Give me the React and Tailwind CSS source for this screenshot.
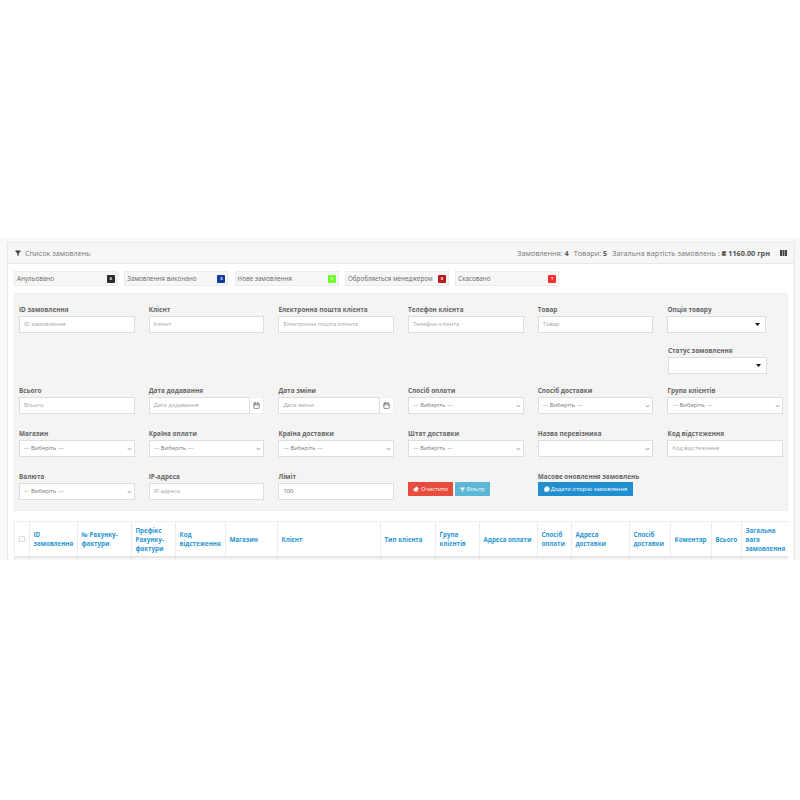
import React from 'react';
import { Filter, Calendar, Eraser, MessageCircle } from 'lucide-react';

const badges = [
  { name: 'Анульовано', count: 6, color: 'bg-[#2b2b2b]' },
  { name: 'Замовлення виконано', count: 3, color: 'bg-[#0f3d99]' },
  { name: 'Нове замовлення', count: 0, color: 'bg-[#6bff2e]' },
  { name: 'Обробляється менеджером', count: 0, color: 'bg-[#b71c1c]' },
  { name: 'Скасовано', count: 1, color: 'bg-[#ff2d2d]' },
];

const columns = [
  { w: 'w-[15px]', text: '' },
  { w: 'w-[48px]', text: 'ID замовлення' },
  { w: 'w-[54px]', text: '№ Рахунку-фактури' },
  { w: 'w-[44px]', text: 'Префікс Рахунку-фактури' },
  { w: 'w-[50px]', text: 'Код відстеження' },
  { w: 'w-[52px]', text: 'Магазин' },
  { w: 'w-[103px]', text: 'Клієнт' },
  { w: 'w-[55px]', text: 'Тип клієнта' },
  { w: 'w-[44px]', text: 'Група клієнтів' },
  { w: 'w-[58px]', text: 'Адреса оплати' },
  { w: 'w-[34px]', text: 'Спосіб оплати' },
  { w: 'w-[58px]', text: 'Адреса доставки' },
  { w: 'w-[41px]', text: 'Спосіб доставки' },
  { w: 'w-[41px]', text: 'Коментар' },
  { w: 'w-[30px]', text: 'Всього' },
  { w: 'w-[46px]', text: 'Загальна вага замовлення' },
];

const Label = ({ children }) => (
  <div className="h-[11px] mb-[1px] text-[6.4px] leading-[11px] font-bold text-[#666666] whitespace-nowrap">{children}</div>
);

const TextField = ({ label, value }) => (
  <div className="w-[115.5px]">
    <Label>{label}</Label>
    <div className={`h-[17px] bg-white border border-[#dedede] px-[4px] text-[5.8px] leading-[15px] whitespace-nowrap ${value ? 'text-[#666666]' : 'text-[#a5a5a5]'}`}>
      {value || label}
    </div>
  </div>
);

const DateField = ({ label }) => (
  <div className="w-[115.5px]">
    <Label>{label}</Label>
    <div className="flex h-[17px]">
      <div className="flex-1 bg-white border border-[#dedede] px-[4px] text-[5.8px] leading-[15px] text-[#a5a5a5] whitespace-nowrap">{label}</div>
      <div className="w-[14px] flex items-center justify-center bg-white border-y border-r border-[#eeeeee]">
        <Calendar size={7} strokeWidth={2.5} className="text-[#666666]" />
      </div>
    </div>
  </div>
);

const SelectField = ({ label, value = '--- Виберіть ---' }) => (
  <div className="w-[115.5px]">
    <Label>{label}</Label>
    <div className="flex items-center justify-between h-[17px] bg-white border border-[#dedede] pl-[4px] pr-[2px] text-[5.8px] text-[#777777] whitespace-nowrap">
      <span>{value}</span>
      <svg width="5" height="4" viewBox="0 0 6 4" fill="none" stroke="#777777" strokeWidth="1"><path d="M1 1l2 2 2-2" /></svg>
    </div>
  </div>
);

const DropField = ({ label }) => (
  <div className="w-[99px]">
    <Label>{label}</Label>
    <div className="flex items-center justify-end h-[17px] bg-white border border-[#dedede] pr-[5px]">
      <svg width="5" height="3" viewBox="0 0 5 3" fill="#111111"><path d="M0 0h5L2.5 3z" /></svg>
    </div>
  </div>
);

const Row = ({ className, children }) => (
  <div className={`flex gap-[14.2px] ${className}`}>{children}</div>
);

export default function App() {
  return (
    <div className="h-[800px] bg-white pt-[238px] font-['Open_Sans',sans-serif] overflow-hidden">
      <div className="h-[322px] bg-[#f8f8f8] pt-[4px] pl-[7px] pr-[5px] overflow-hidden">
        <div className="h-[330px] bg-white border border-[#e8e8e8]">
          {/* panel heading */}
          <div className="flex items-center justify-between h-[21px] bg-[#f6f6f6] border-b border-[#e8e8e8] pl-[7px] pr-[7px] text-[7.25px] text-[#777777]">
            <div className="flex items-center gap-[4px]">
              <Filter size={6} fill="#444444" stroke="#444444" />
              <span>Список замовлень</span>
            </div>
            <div className="flex items-center whitespace-nowrap">
              <span>Замовлення: <b className="text-[#555555]">4</b></span>
              <span className="ml-[5px]">Товари: <b className="text-[#555555]">5</b></span>
              <span className="ml-[5px]">Загальна вартість замовлень : <b className="text-[#555555]">₴ 1160.00 грн</b></span>
              <svg className="ml-[10px]" width="7" height="6" viewBox="0 0 7 6" fill="#444444"><path d="M0 0h2v6H0zM2.5 0h2v6h-2zM5 0h2v6H5z" /></svg>
            </div>
          </div>

          <div className="pl-[6px] pr-[6px]">
            {/* status badges */}
            <div className="flex gap-[6.3px] pt-[7px]">
              {badges.map((b) => (
                <div key={b.name} className="flex items-center justify-between w-[104px] h-[15px] bg-[#f6f6f6] border border-[#ececec] pl-[2px] pr-[2px] text-[6.3px] text-[#666666] whitespace-nowrap">
                  <span>{b.name}</span>
                  <span className={`w-[8px] h-[8px] rounded-[1px] text-[4px] leading-[8px] text-center font-bold text-white ${b.color}`}>{b.count}</span>
                </div>
              ))}
            </div>

            {/* filter form */}
            <div className="mt-[7px] h-[218px] bg-[#f4f4f4] border border-[#eeeeee] pl-[4px] pt-[10px]">
              <Row>
                <TextField label="ID замовлення" />
                <TextField label="Клієнт" />
                <TextField label="Електронна пошта клієнта" />
                <TextField label="Телефон клієнта" />
                <TextField label="Товар" />
                <DropField label="Опція товару" />
              </Row>
              <Row className="mt-[12px] justify-end pr-[20px]">
                <DropField label="Статус замовлення" />
              </Row>
              <Row className="mt-[11px]">
                <TextField label="Всього" />
                <DateField label="Дата додавання" />
                <DateField label="Дата зміни" />
                <SelectField label="Спосіб оплати" />
                <SelectField label="Спосіб доставки" />
                <SelectField label="Група клієнтів" />
              </Row>
              <Row className="mt-[14px]">
                <SelectField label="Магазин" />
                <SelectField label="Країна оплати" />
                <SelectField label="Країна доставки" />
                <SelectField label="Штат доставки" />
                <SelectField label="Назва перевізника" value=" " />
                <TextField label="Код відстеження" />
              </Row>
              <Row className="mt-[14px]">
                <SelectField label="Валюта" />
                <TextField label="IP-адреса" />
                <TextField label="Ліміт" value="100" />
                <div className="w-[115.5px] flex items-start gap-[2px] pt-[11px]">
                  <button className="flex items-center gap-[2px] h-[14px] px-[5px] bg-[#e74c3c] text-white text-[5.7px] whitespace-nowrap">
                    <Eraser size={6} fill="#ffffff" />
                    Очистити
                  </button>
                  <button className="flex items-center gap-[1px] h-[14px] px-[5px] bg-[#5bb7d5] text-white text-[5.7px] whitespace-nowrap">
                    <Filter size={5} fill="#ffffff" />
                    Фільтр
                  </button>
                </div>
                <div className="w-[115.5px]">
                  <Label>Масове оновлення замовлень</Label>
                  <button className="flex items-center gap-[1px] h-[14px] -mt-[1px] px-[6px] bg-[#1f8fcf] text-white text-[5.7px] whitespace-nowrap">
                    <MessageCircle size={6} fill="#ffffff" />
                    Додати історію замовлення
                  </button>
                </div>
              </Row>
            </div>

            {/* orders table */}
            <div className="mt-[10px] flex h-[37px] border-y border-[#ececec] border-b-2 border-b-[#e6e6e6]">
              {columns.map((c, i) => (
                <div key={i} className={`${c.w} shrink-0 flex items-center border-l border-[#ececec] pl-[3.5px] pr-[1px] text-[6.2px] leading-[9px] font-bold text-[#2a96d2]`}>
                  {i === 0 ? <span className="w-[6px] h-[6px] bg-white border border-[#dddddd]" /> : c.text}
                </div>
              ))}
            </div>
            <div className="flex h-[6px] bg-[#f6f6f6]">
              {columns.map((c, i) => (
                <div key={i} className={`${c.w} shrink-0 border-l border-[#ececec]`} />
              ))}
            </div>
          </div>
        </div>
      </div>
    </div>
  );
}
